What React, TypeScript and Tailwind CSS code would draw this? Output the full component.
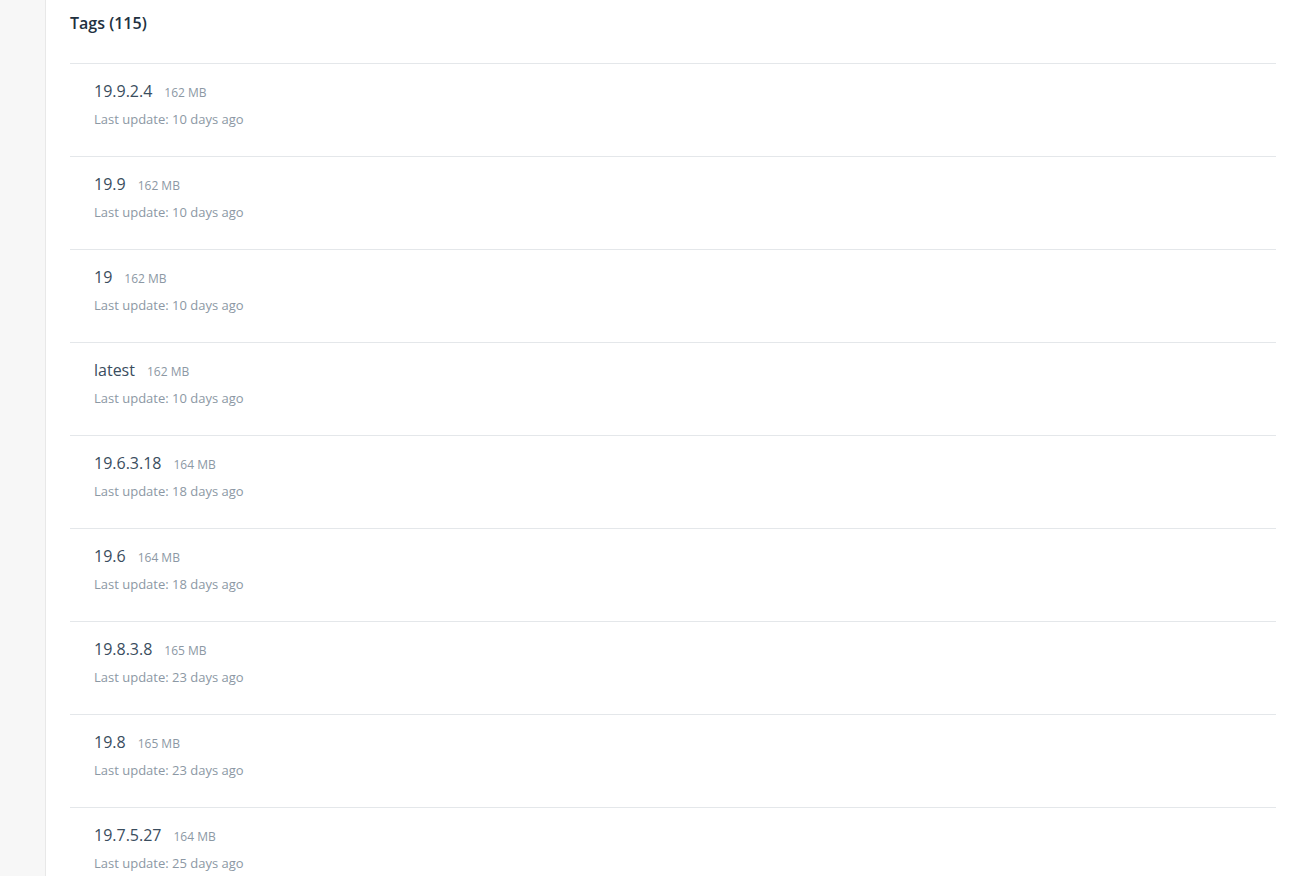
import React from "react";

const tags = [
  { name: "19.9.2.4", size: "162 MB", updated: "10 days ago" },
  { name: "19.9", size: "162 MB", updated: "10 days ago" },
  { name: "19", size: "162 MB", updated: "10 days ago" },
  { name: "latest", size: "162 MB", updated: "10 days ago" },
  { name: "19.6.3.18", size: "164 MB", updated: "18 days ago" },
  { name: "19.6", size: "164 MB", updated: "18 days ago" },
  { name: "19.8.3.8", size: "165 MB", updated: "23 days ago" },
  { name: "19.8", size: "165 MB", updated: "23 days ago" },
  { name: "19.7.5.27", size: "164 MB", updated: "25 days ago" },
];

const App = () => {
  return (
    <div
      className="flex h-[876px] overflow-hidden bg-white"
      style={{ fontFamily: '"Open Sans", "Noto Sans", sans-serif' }}
    >
      <div className="w-[46px] shrink-0 bg-[#f7f7f7] border-r border-[#e8e8e8]" />

      <div className="flex-1 pl-[24px] pr-[19px]">
        <h1 className="pt-[11px] h-[63px] text-[16px] leading-[24px] font-semibold text-[#22313f]">
          Tags (115)
        </h1>

        <ul>
          {tags.map((tag) => (
            <li
              key={tag.name}
              className="border-t border-[#e4e7ea] h-[93px] pl-[24px] pt-[16px]"
            >
              <div className="flex items-baseline">
                <span className="text-[16px] leading-[22px] text-[#3a4d5e]">
                  {tag.name}
                </span>
                <span className="ml-[12px] text-[12px] leading-[22px] text-[#8c98a4]">
                  {tag.size}
                </span>
              </div>
              <p className="mt-[5px] text-[13px] leading-[20px] text-[#8c98a4]">
                Last update: {tag.updated}
              </p>
            </li>
          ))}
        </ul>
      </div>
    </div>
  );
};

export default App;
